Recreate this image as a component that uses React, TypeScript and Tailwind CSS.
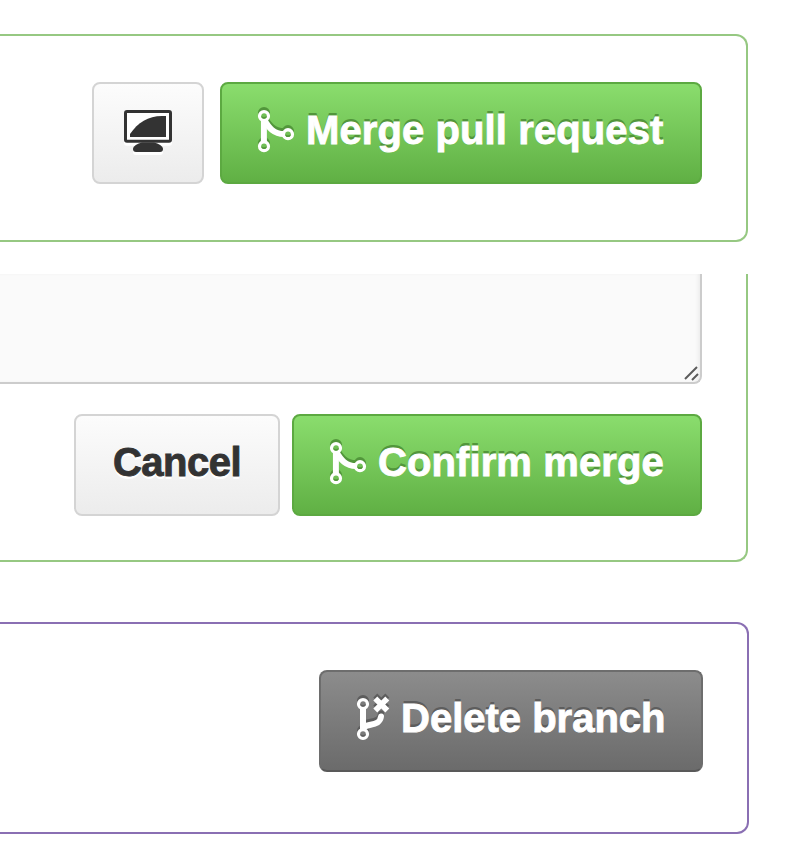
import type { ReactNode } from 'react';

const buttonBase =
  'flex h-[102px] items-center gap-2.5 rounded-lg border-2 bg-linear-to-b font-bold text-[40px] leading-[48px] whitespace-nowrap';

const green =
  'border-[#5ca941] from-[#8add6d] to-[#60b044] text-white tracking-[0.1px] [text-shadow:0_-3px_0_#52963b]';
const light =
  'border-[#d4d4d4] from-[#fcfcfc] to-[#ececec] text-[#333] tracking-[-0.5px] [text-shadow:0_3px_0_white]';
const gray =
  'border-[#6d6d6d] border-b-[#595959] from-[#8c8c8c] to-[#6b6b6b] text-white [text-shadow:0_-3px_0_#5d5d5d]';

function Label({ children }: { children: ReactNode }) {
  return <span className="[-webkit-text-stroke:0.9px_currentColor]">{children}</span>;
}

function MergeIcon() {
  return (
    <svg
      className="h-12 w-10 shrink-0 overflow-visible [filter:drop-shadow(0_-3px_0_#52963b)]"
      viewBox="0 0 40 48"
      fill="none"
      stroke="white"
    >
      <path d="M7.900 13v23" strokeWidth="6" />
      <path d="M7.500 12.500C13 22.500 18 28.100 28 28.100" strokeWidth="6" />
      <g fill="#70bf55" strokeWidth="3.300">
        <circle cx="8" cy="10" r="4.450" />
        <circle cx="8" cy="40.200" r="4.450" />
        <circle cx="32" cy="28.200" r="4.450" />
      </g>
      <g fill="#54983c" stroke="none">
        <path d="M5.200 10a2.800 2.800 0 0 0 5.600 0q-2.800 2-5.600 0Z" />
        <path d="M5.200 40.200a2.800 2.800 0 0 0 5.600 0q-2.800 2-5.600 0Z" />
        <path d="M29.200 28.200a2.800 2.800 0 0 0 5.600 0q-2.800 2-5.600 0Z" />
      </g>
    </svg>
  );
}

function DeleteBranchIcon() {
  return (
    <svg
      className="h-12 w-9 shrink-0 overflow-visible [filter:drop-shadow(0_-3px_0_#5d5d5d)]"
      viewBox="0 0 36 48"
      fill="none"
      stroke="white"
    >
      <path d="M8 13v23" strokeWidth="6" />
      <path d="M8 35.500C10 29.500 17 32 22.500 28.500Q25.500 26.500 26 22.500" strokeWidth="6" strokeLinecap="round" />
      <path d="m20.300 4.500 12 12m0-12-12 12" strokeWidth="5.600" />
      <g fill="#7b7b7b" strokeWidth="3.300">
        <circle cx="8" cy="10" r="4.450" />
        <circle cx="8" cy="40" r="4.450" />
      </g>
      <g fill="#606060" stroke="none">
        <path d="M5.200 10a2.800 2.800 0 0 0 5.600 0q-2.800 2-5.600 0Z" />
        <path d="M5.200 40a2.800 2.800 0 0 0 5.600 0q-2.800 2-5.600 0Z" />
      </g>
    </svg>
  );
}

function MonitorIcon() {
  return (
    <svg className="h-[42px] w-12 overflow-visible [filter:drop-shadow(0_3px_0_white)]" viewBox="0 0 48 42">
      <rect x="1.500" y="1.500" width="45" height="29.800" rx="1.500" fill="white" stroke="#333" strokeWidth="3" />
      <path d="M6 27V24C14 12.500 24 6 38 6h4v21Z" fill="#333" />
      <path d="M18 32.500h12c4.500 1 9 3.500 9 6.500q0 3-3 3H12q-3 0-3-3c0-3 4.500-5.500 9-6.500Z" fill="#333" />
    </svg>
  );
}

export default function App() {
  return (
    <main className="flex h-[864px] w-[786px] flex-col overflow-hidden bg-white pt-[34px] font-['Liberation_Sans',Arial,sans-serif]">
      <section className="flex h-[208px] w-[748px] items-center justify-end gap-4 rounded-r-xl border-y-2 border-r-2 border-[#96c882] pr-11 pb-2.5">
        <button aria-label="Open in desktop" className={`${buttonBase} ${light} px-[30px] pb-1`}>
          <MonitorIcon />
        </button>
        <button className={`${buttonBase} ${green} w-[482px] pb-[7px] pl-[34px]`}>
          <MergeIcon />
          <Label>Merge pull request</Label>
        </button>
      </section>

      <section className="mt-8 flex h-[288px] w-[748px] flex-col gap-[30px] rounded-br-xl border-r-2 border-b-2 border-[#96c882] pr-11">
        <div className="flex h-[110px] items-end justify-end rounded-br-lg border-r-2 border-b-2 border-[#ccc] bg-[#fafafa] shadow-[inset_-3px_0_4px_-2px_#e7e7e7]">
          <svg className="h-4 w-4" viewBox="0 0 16 16" fill="none" stroke="#5c5c5c" strokeWidth="2">
            <path d="M1 13 13 1M8 14l6-6" />
          </svg>
        </div>
        <div className="flex justify-end gap-3">
          <button className={`${buttonBase} ${light} w-[206px] justify-center pb-[7px]`}>
            <Label>Cancel</Label>
          </button>
          <button className={`${buttonBase} ${green} w-[410px] pb-[7px] pl-[34px]`}>
            <MergeIcon />
            <Label>Confirm merge</Label>
          </button>
        </div>
      </section>

      <section className="mt-[60px] flex h-[212px] w-[749px] items-center justify-end rounded-r-xl border-y-2 border-r-2 border-[#8a6fb3] pr-11 pb-[14px]">
        <button className={`${buttonBase} ${gray} w-[384px] pb-[7px] pl-[34px]`}>
          <DeleteBranchIcon />
          <Label>Delete branch</Label>
        </button>
      </section>
    </main>
  );
}
